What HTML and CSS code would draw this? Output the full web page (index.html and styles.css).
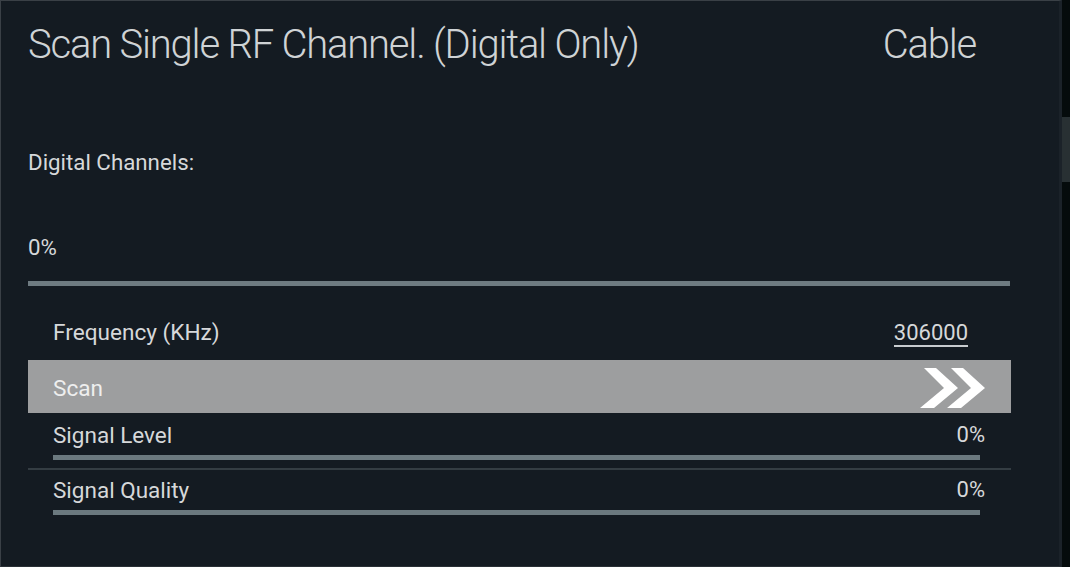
FILE: index.html
```html
<!DOCTYPE html>
<html>
<head>
<meta charset="utf-8">
<link rel="stylesheet" href="styles.css">
</head>
<body>
<div class="screen">
  <div class="panel">
    <div class="header">
      <div class="title">Scan Single RF Channel. (Digital Only)</div>
      <div class="title">Cable</div>
    </div>
    <div class="label dc">Digital Channels:</div>
    <div class="label pct">0%</div>
    <div class="progress"></div>
    <div class="row freq">
      <span>Frequency (KHz)</span>
      <span class="num">306000</span>
    </div>
    <div class="row scan">
      <span>Scan</span>
      <svg class="chev" width="68" height="42" viewBox="0 0 68 42">
        <polygon points="6,1 18,1 40,21 16,41 2,41 26,21" fill="#ffffff"/>
        <polygon points="33,1 45,1 67,21 43,41 29,41 53,21" fill="#ffffff"/>
      </svg>
    </div>
    <div class="signal first">
      <div class="sline"><span>Signal Level</span><span>0%</span></div>
      <div class="sbar"></div>
    </div>
    <div class="sep"></div>
    <div class="signal">
      <div class="sline"><span>Signal Quality</span><span>0%</span></div>
      <div class="sbar"></div>
    </div>
  </div>
  <div class="rail"><div class="thumb"></div></div>
</div>
</body>
</html>
```

FILE: styles.css
```css
html, body {
  margin: 0;
  padding: 0;
  background: #141b22;
}
body {
  width: 1070px;
  height: 567px;
  overflow: hidden;
  font-family: Roboto, "Liberation Sans", sans-serif;
  color: #d6d8da;
}
.screen {
  display: flex;
  width: 1070px;
  height: 567px;
}
.panel {
  flex: 1;
  box-sizing: border-box;
  height: 567px;
  border-left: 1px solid #3a4046;
  border-top: 1px solid #3a4046;
  border-bottom: 1px solid #2a3036;
  border-right: 3px solid #1b2229;
  padding: 0 48px 0 27px;
  background: #141b22;
}
.rail {
  width: 8px;
  background: #050b0c;
}
.thumb {
  margin-top: 117px;
  height: 65px;
  background: #283033;
}
.header {
  display: flex;
  justify-content: space-between;
  margin-top: 20px;
  padding-right: 35px;
  height: 48px;
}
.title {
  font-size: 40px;
  font-weight: 300;
  line-height: 48px;
  letter-spacing: -1.2px;
  color: #cfd3d5;
}
.label {
  font-size: 22.3px;
  line-height: 24px;
}
.dc {
  margin-top: 81px;
}
.pct {
  margin-top: 61px;
}
.progress {
  margin-top: 22px;
  height: 5px;
  background: #6e7b81;
  margin-right: 1px;
}
.row {
  display: flex;
  justify-content: space-between;
  align-items: center;
  font-size: 22.6px;
  line-height: 26px;
  padding-left: 25px;
}
.freq {
  height: 74px;
  align-items: flex-start;
  box-sizing: border-box;
  padding-top: 34px;
  padding-right: 43px;
}
.num {
  font-size: 22px;
  line-height: 25px;
  border-bottom: 2px solid #c8cccf;
}
.scan {
  height: 53px;
  background: #9d9e9f;
  color: #eeeeee;
  padding-right: 25px;
  padding-top: 2px;
  box-sizing: border-box;
}
.scan span {
  padding-top: 3px;
}
.chev {
  display: block;
}
.signal {
  padding-left: 25px;
  padding-right: 26px;
  font-size: 22.5px;
  line-height: 26px;
}
.signal.first {
  padding-top: 9px;
}
.sline {
  display: flex;
  justify-content: space-between;
}
.sline span:last-child {
  font-size: 22px;
}
.sbar {
  margin-top: 7px;
  margin-right: 5px;
  height: 5px;
  background: #6b797f;
}
.sep {
  margin-top: 8px;
  margin-bottom: 7px;
  height: 2px;
  background: #343d43;
}
```
